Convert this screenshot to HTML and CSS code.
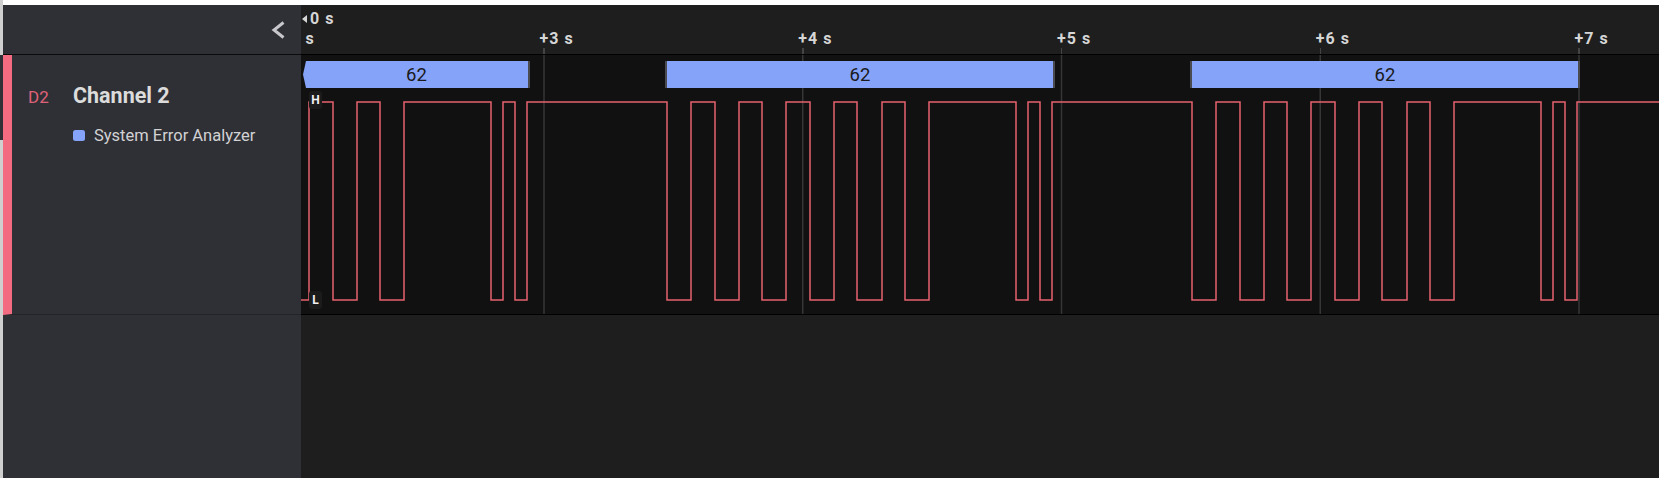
FILE: index.html
```html
<!DOCTYPE html>
<html lang="en">
<head>
<meta charset="utf-8">
<title>Logic analyzer – Channel 2</title>
<link rel="stylesheet" href="styles.css">
</head>
<body>
<div class="edge">
  <div class="edge-top"></div>
  <div class="edge-gap"></div>
  <div class="edge-bottom"></div>
</div>
<div class="content">
  <div class="topbar"></div>
  <div class="main">
    <aside class="sidebar">
      <div class="side-head">
        <svg class="chevron" width="14" height="18" viewBox="0 0 14 18" aria-hidden="true">
          <polyline points="12.5,1.5 3,9 12.5,16.5" fill="none" stroke="#c8c8cc" stroke-width="3"/>
        </svg>
      </div>
      <div class="channel">
        <div class="ch-row">
          <span class="ch-id">D2</span>
          <span class="ch-name">Channel 2</span>
        </div>
        <div class="ch-analyzer">
          <span class="swatch"></span>
          <span>System Error Analyzer</span>
        </div>
      </div>
      <div class="side-rest"></div>
    </aside>
    <section class="timeline">
      <div class="ruler">
        <span class="tick-label row-1 zero"><span class="tri"></span>0 s</span>
        <span class="tick-label row-2" style="left:4.5px">s</span>
        <span class="tick-label row-2" style="left:238.5px">+3 s</span>
        <span class="tick-label row-2" style="left:497.25px">+4 s</span>
        <span class="tick-label row-2" style="left:756px">+5 s</span>
        <span class="tick-label row-2" style="left:1014.75px">+6 s</span>
        <span class="tick-label row-2" style="left:1273.5px">+7 s</span>
        <span class="tick-mark" style="left:242.25px"></span>
        <span class="tick-mark" style="left:501px"></span>
        <span class="tick-mark" style="left:759.75px"></span>
        <span class="tick-mark" style="left:1018.5px"></span>
        <span class="tick-mark" style="left:1277.25px"></span>
      </div>
      <div class="wave-row">
        <svg class="wave" width="1358" height="259" viewBox="301 55 1358 259">
          <g stroke="#363636" stroke-width="1.5">
            <line x1="544" y1="55" x2="544" y2="314"/>
            <line x1="802.75" y1="55" x2="802.75" y2="314"/>
            <line x1="1061.5" y1="55" x2="1061.5" y2="314"/>
            <line x1="1320.25" y1="55" x2="1320.25" y2="314"/>
            <line x1="1579" y1="55" x2="1579" y2="314"/>
          </g>
          <g fill="#4a4b50">
            <rect x="528" y="61" width="2" height="27"/>
            <rect x="665" y="61" width="2" height="27"/>
            <rect x="1053" y="61" width="2" height="27"/>
            <rect x="1190" y="61" width="2" height="27"/>
            <rect x="1578" y="61" width="2" height="27"/>
          </g>
          <g fill="#85a3f9">
            <polygon points="306,61 528,61 528,88 306,88 303,74.5"/>
            <rect x="667" y="61" width="386" height="27"/>
            <rect x="1192" y="61" width="386" height="27"/>
          </g>
          <g class="bar-text" fill="#1a1a1a" text-anchor="middle">
            <text x="416.5" y="81">62</text>
            <text x="860" y="81">62</text>
            <text x="1385" y="81">62</text>
          </g>
          <path fill="none" stroke="#e5626f" stroke-width="1.5" d="M301 300 H309 V102 H333 V300 H357 V102 H380 V300 H404 V102 H491 V300 H503 V102 H515 V300 H527 V102 H667 V300 H691 V102 H715 V300 H739 V102 H762 V300 H786 V102 H810 V300 H834 V102 H857 V300 H882 V102 H905 V300 H929 V102 H1016 V300 H1028 V102 H1040 V300 H1052 V102 H1192 V300 H1216 V102 H1240 V300 H1264 V102 H1287 V300 H1311 V102 H1335 V300 H1359 V102 H1382 V300 H1407 V102 H1430 V300 H1454 V102 H1541 V300 H1553 V102 H1565 V300 H1577 V102 H1659"/>
        </svg>
        <span class="lvl lvl-h">H</span>
        <span class="lvl lvl-l">L</span>
      </div>
      <div class="rest"></div>
    </section>
  </div>
</div>
</body>
</html>
```

FILE: styles.css
```css
* { box-sizing: border-box; }

html, body {
  margin: 0;
  height: 100%;
}

body {
  font-family: Roboto, "Noto Sans", "Liberation Sans", sans-serif;
  background: #1e1e1e;
  display: flex;
  overflow: hidden;
}

.edge {
  width: 3px;
  flex: none;
  display: flex;
  flex-direction: column;
}
.edge-top { height: 55px; background: #cfcfcf; }
.edge-gap { height: 85px; background: #2f3035; }
.edge-bottom { flex: 1; background: #cfcfcf; }

.content {
  flex: 1;
  min-width: 0;
  display: flex;
  flex-direction: column;
}

.topbar {
  height: 5px;
  flex: none;
  background: #ffffff;
}

.main {
  flex: 1;
  min-height: 0;
  display: flex;
}

/* Sidebar */
.sidebar {
  width: 298px;
  flex: none;
  background: #2f3035;
  display: flex;
  flex-direction: column;
}

.side-head {
  height: 50px;
  flex: none;
  border-bottom: 1px solid #0b0b0c;
  display: flex;
  align-items: center;
  justify-content: flex-end;
  padding-right: 16px;
}

.chevron { display: block; }

.channel {
  height: 260px;
  flex: none;
  border-left: 9px solid #f26b80;
  border-bottom: 1px solid #232428;
  padding: 27px 0 0 16px;
}

.ch-row {
  display: flex;
  align-items: baseline;
}

.ch-id {
  width: 45px;
  color: #e0627a;
  font-size: 17px;
  line-height: 28px;
}

.ch-name {
  color: #dcdcdc;
  font-size: 21.5px;
  font-weight: 700;
  line-height: 28px;
}

.ch-analyzer {
  display: flex;
  align-items: center;
  gap: 9px;
  margin: 15px 0 0 45px;
  color: #d2d2d4;
  font-size: 16.5px;
  line-height: 20px;
}

.swatch {
  width: 12px;
  height: 11px;
  border-radius: 2.5px;
  background: #85a3f9;
  margin-top: -1px;
}

.side-rest { flex: 1; }

/* Timeline */
.timeline {
  flex: 1;
  min-width: 0;
  display: flex;
  flex-direction: column;
}

.ruler {
  height: 50px;
  flex: none;
  background: #1e1e1e;
  border-bottom: 1px solid #000;
  position: relative;
  overflow: hidden;
}

.tick-label {
  position: absolute;
  font-size: 16px;
  font-weight: 700;
  letter-spacing: 1px;
  line-height: 20px;
  color: #d6d6d6;
  white-space: nowrap;
}

.row-1 { top: 4px; }
.row-2 { top: 24px; }

.zero {
  left: 1px;
  display: flex;
  align-items: center;
  gap: 3px;
}

.tri {
  width: 0;
  height: 0;
  border-top: 4px solid transparent;
  border-bottom: 4px solid transparent;
  border-right: 5px solid #d6d6d6;
}

.tick-mark {
  position: absolute;
  top: 43px;
  width: 1.5px;
  height: 6px;
  background: #444;
}

.wave-row {
  height: 260px;
  flex: none;
  background: #111111;
  border-bottom: 1px solid #000;
  position: relative;
  overflow: hidden;
}

.wave { display: block; }

.bar-text {
  font-family: Roboto, "Noto Sans", sans-serif;
  font-size: 18.5px;
}

.lvl {
  position: absolute;
  left: 8px;
  width: 13px;
  height: 18px;
  border-radius: 3px;
  background: #1b1b1b;
  color: #f2f2f2;
  font-size: 12px;
  font-weight: 700;
  line-height: 18px;
  text-align: center;
}
.lvl-h { top: 36px; }
.lvl-l { top: 236px; }

.rest {
  flex: 1;
  background: #1e1e1e;
}
```
